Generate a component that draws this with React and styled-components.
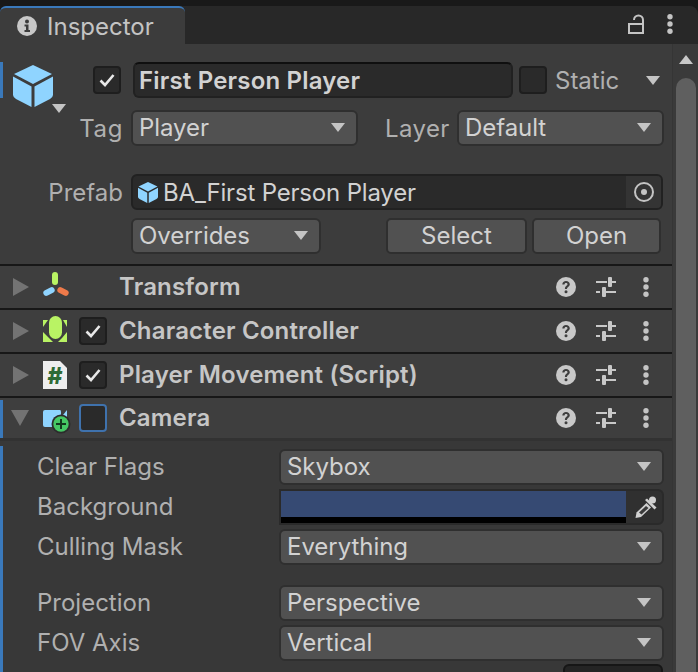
import React from "react";
import styled, { createGlobalStyle } from "styled-components";

const Global = createGlobalStyle`
  html, body { margin: 0; padding: 0; background: #191919; }
  body { font-family: Inter, "Liberation Sans", sans-serif; }
  #root { width: 698px; height: 672px; overflow: hidden; }
`;
const Page = styled.div`
  width: 698px; height: 672px; padding-top: 6px; box-sizing: border-box;
  display: flex; flex-direction: column; background: #191919; overflow: hidden;
`;
const TabBar = styled.div`
  height: 38px; flex: none; display: flex; justify-content: space-between;
  background: #282828; border-radius: 8px 8px 0 0;
`;
const Tab = styled.div`
  width: 185px; box-sizing: border-box; background: #3c3c3c; border-top: 2px solid #3a79bb;
  border-radius: 6px 6px 0 0; display: flex; align-items: center; gap: 10px; padding-left: 17px;
  color: #c4c4c4; font-size: 24px;
`;
const TabTools = styled.div`
  display: flex; align-items: center; gap: 23px; padding-right: 25px; padding-bottom: 2px;
`;
const Content = styled.div`flex: 1; display: flex; min-height: 0; background: #3c3c3c;`;
const Main = styled.div`width: 672px; flex: none; display: flex; flex-direction: column;`;
const Scroll = styled.div`
  width: 26px; flex: none; background: #3a3a3a; border-left: 1px solid #353535; box-sizing: border-box;
  display: flex; flex-direction: column; align-items: center; padding-top: 11px; padding-left: 1px;
`;
const ScrollArrow = styled.div`
  width: 0; height: 0; border-left: 7.5px solid transparent; border-right: 7.5px solid transparent;
  border-bottom: 9px solid #c8c8c8; margin-bottom: 14px;
`;
const Thumb = styled.div`width: 20px; flex: 1; background: #5f5f5f; border-radius: 10px 10px 0 0;`;
const Header = styled.div`
  height: 220px; flex: none; box-sizing: border-box; padding-top: 18px; position: relative;
  display: flex; flex-direction: column;
`;
const HeaderRow = styled.div`
  display: flex; align-items: center; height: 36px; flex: none;
  margin-top: ${p => p.$mt || 0}px; padding-left: ${p => p.$pl || 0}px;
`;
const ModifiedBar = styled.div`
  position: absolute; left: 0; top: ${p => p.$top}px; height: ${p => p.$h}px; width: 3px; background: #3a79bb;
`;
const BigCube = styled.div`width: 93px; flex: none; position: relative; height: 36px;`;
const CubeWrap = styled.div`position: absolute; left: 13px; top: 3px; line-height: 0;`;
const CubeCaret = styled.div`
  position: absolute; left: 52px; top: 42px; width: 0; height: 0;
  border-left: 7px solid transparent; border-right: 7px solid transparent; border-top: 9px solid #c4c4c4;
`;
const Check = styled.div`
  width: 28px; height: 28px; flex: none; box-sizing: border-box; background: #2a2a2a;
  border: 2px solid ${p => p.$focus ? "#3f72ad" : "#1e1e1e"}; border-radius: 4px;
  display: flex; align-items: center; justify-content: center;
`;
const NameField = styled.div`
  width: 380px; height: 36px; box-sizing: border-box; margin-left: 12px; margin-right: 6px;
  background: #2a2a2a; border: 2px solid #212121; border-top-color: #0f0f0f; border-radius: 6px;
  color: #d2d2d2; font-size: 24px; font-weight: 600; letter-spacing: 0.18px; padding-left: 4px;
  display: flex; align-items: center;
`;
const StaticLabel = styled.div`color: #b0b0b0; font-size: 24px; margin-left: 8px; width: 91px;`;
const Arrow = styled.div`
  width: 0; height: 0; flex: none; border-left: 7.5px solid transparent; border-right: 7.5px solid transparent;
  border-top: 9px solid #c4c4c4;
`;
const RowLabel = styled.div`
  color: #b0b0b0; font-size: 24px; width: ${p => p.$w}px; text-align: right; flex: none;
  letter-spacing: ${p => p.$ls || 0}px;
  margin-left: ${p => p.$ml || 0}px; margin-right: ${p => p.$mr ?? 8}px;
`;
const Select = styled.div`
  width: ${p => p.$w}px; height: 36px; flex: none; box-sizing: border-box;
  background: #515151; border: 2px solid #2f2f2f; border-radius: 6px; color: #d2d2d2; font-size: 24px;
  display: flex; align-items: center; justify-content: space-between; padding: 0 11px 2px 6px;
  letter-spacing: -0.05px;
`;
const PrefabField = styled.div`
  width: 532px; height: 36px; box-sizing: border-box; flex: none; background: #2a2a2a;
  border: 2px solid #212121; border-radius: 6px; display: flex; align-items: center;
  color: #d2d2d2; font-size: 24px; padding-left: 5px; gap: 5px;
`;
const PrefabName = styled.div`flex: 1; letter-spacing: -0.18px;`;
const Picker = styled.div`
  width: 35px; height: 32px; flex: none; background: #343434; display: flex; align-items: center;
  justify-content: center; border-radius: 0 4px 4px 0;
`;
const Button = styled.div`
  width: ${p => p.$w}px; height: 36px; box-sizing: border-box; flex: none; background: #515151;
  border: 2px solid #2f2f2f; border-radius: 5px; color: #d2d2d2; font-size: 24px; text-align: center;
  line-height: 32px; margin-left: ${p => p.$ml || 0}px;
`;
const CompRow = styled.div`
  height: ${p => p.$h || 44}px; flex: none; box-sizing: border-box; position: relative;
  border-top: 2px solid #171717; background: #3e3e3e; display: flex; align-items: center; padding-left: 13px;
`;
const ComponentArrowRight = styled.div`
  width: 0; height: 0; flex: none; border-top: 9px solid transparent; border-bottom: 9px solid transparent;
  border-left: 16px solid #737373; margin-right: 13px;
`;
const ComponentArrowDown = styled.div`
  width: 0; height: 0; flex: none; border-left: 9px solid transparent; border-right: 9px solid transparent;
  border-top: 16px solid #737373; margin-left: -2px; margin-right: 13px;
`;
const CompIcon = styled.div`width: 26px; height: 28px; flex: none; line-height: 0; margin-right: 11px;`;
const CheckSlot = styled.div`width: 28px; flex: none; margin-right: 12px;`;
const CompName = styled.div`
  color: #c6c6c6; font-size: 24px; font-weight: 600; letter-spacing: 0.17px; flex: 1; padding-bottom: 1px;
`;
const CompTools = styled.div`display: flex; align-items: center; padding-right: 23px;`;
const HelpSlot = styled.div`display: flex; margin-right: 20px;`;
const SliderSlot = styled.div`display: flex; margin-right: 27px;`;
const Body = styled.div`
  flex: 1; background: #383838; position: relative; box-sizing: border-box; padding: 9px 9px 0 37px;
  border-top: 3px solid #323232; display: flex; flex-direction: column;
`;
const PropRow = styled.div`
  height: 34px; flex: none; display: flex; align-items: center; margin-top: ${p => p.$mt || 0}px;
`;
const PropLabel = styled.div`width: 242px; flex: none; color: #b0b0b0; font-size: 24px; padding-bottom: 1px;`;
const ColorField = styled.div`
  width: 385px; height: 36px; box-sizing: border-box; flex: none; display: flex;
  background: #303030; border: 2px solid #2a2a2a; border-radius: 0 6px 6px 0;
`;
const Swatch = styled.div`flex: 1; display: flex; flex-direction: column; background: #000;`;
const SwatchColor = styled.div`height: 26px; background: #364a73;`;
const Dropper = styled.div`
  width: 36px; flex: none; display: flex; align-items: center; justify-content: center; padding-left: 3px;
  box-sizing: border-box;
`;
const BottomButton = styled.div`
  position: absolute; left: 563px; top: 223px; width: 100px; height: 30px; box-sizing: border-box;
  background: #242424; border: 2px solid #161616; border-radius: 6px;
`;

const Tick = () => (
  <svg width="16" height="14" viewBox="0 0 16 14">
    <path d="M1.5 7.5 L6 12 L14.5 2" fill="none" stroke="#e8e8e8" strokeWidth="2.6" />
  </svg>
);
const Cube = ({ size }) => (
  <svg width={size} height={size * 1.05} viewBox="0 0 40 42">
    <path d="M20 0 L39 9 L20 19 L1 9 Z" fill="#8fd4ff" />
    <path d="M0 11.5 L18.5 21.5 L18.5 42 L3 34 Q0 32 0 30 Z" fill="#8fd4ff" />
    <path d="M40 11.5 L21.5 21.5 L21.5 42 L37 34 Q40 32 40 30 Z" fill="#8fd4ff" />
  </svg>
);
const InfoIcon = () => (
  <svg width="20" height="20" viewBox="0 0 20 20">
    <circle cx="10" cy="10" r="10" fill="#c8c8c8" />
    <circle cx="10" cy="5.5" r="2" fill="#3c3c3c" />
    <path d="M7.5 8.5 H11.5 V14 H13 V16 H7.5 V14 H9 V10.5 H7.5 Z" fill="#3c3c3c" />
  </svg>
);
const LockIcon = () => (
  <svg width="16" height="20" viewBox="0 0 16 20">
    <rect x="1" y="10" width="14" height="9" fill="none" stroke="#c4c4c4" strokeWidth="2" />
    <path d="M6 6 A4.5 4.5 0 0 1 15 6 V10" fill="none" stroke="#c4c4c4" strokeWidth="2" />
  </svg>
);
const Dots = () => (
  <svg width="6" height="20" viewBox="0 0 6 20">
    <circle cx="3" cy="2.8" r="2.7" fill="#c4c4c4" />
    <circle cx="3" cy="10" r="2.7" fill="#c4c4c4" />
    <circle cx="3" cy="17.2" r="2.7" fill="#c4c4c4" />
  </svg>
);
const Help = () => (
  <svg width="20" height="20" viewBox="0 0 20 20">
    <circle cx="10" cy="10" r="10" fill="#c8c8c8" />
    <path d="M6.3 7.6 C6.3 5.2 8 4 10 4 C12.2 4 13.8 5.3 13.8 7.2 C13.8 9.6 11 9.7 11 12 H8.9 C8.9 8.8 11.5 8.8 11.5 7.3 C11.5 6.4 10.9 6 10 6 C9 6 8.5 6.6 8.5 7.6 Z" fill="#3e3e3e" />
    <circle cx="10" cy="14.8" r="1.5" fill="#3e3e3e" />
  </svg>
);
const Sliders = () => (
  <svg width="20" height="20" viewBox="0 0 20 20">
    <g fill="#c8c8c8">
      <rect x="0" y="4" width="11" height="2" />
      <rect x="12" y="0" width="4" height="10" rx="1" />
      <rect x="16" y="4" width="4" height="2" />
      <rect x="0" y="14" width="4" height="2" />
      <rect x="6" y="10" width="4" height="10" rx="1" />
      <rect x="10" y="14" width="10" height="2" />
    </g>
  </svg>
);
const Target = () => (
  <svg width="20" height="20" viewBox="0 0 20 20">
    <circle cx="10" cy="10" r="9" fill="none" stroke="#c4c4c4" strokeWidth="2" />
    <circle cx="10" cy="10" r="3" fill="#c4c4c4" />
  </svg>
);
const TransformIcon = () => (
  <svg width="26" height="28" viewBox="0 0 26 28" style={{ overflow: "visible" }}>
    <rect x="10" y="-1" width="6" height="13" rx="3" fill="#b9f364" />
    <rect x="1" y="15.5" width="12" height="6" rx="3" fill="#8fd4ff" transform="rotate(-27 7 18.5)" />
    <rect x="15" y="15.5" width="12" height="6" rx="3" fill="#ee7a4a" transform="rotate(27 21 18.5)" />
  </svg>
);
const ControllerIcon = () => (
  <svg width="26" height="28" viewBox="0 0 26 28" style={{ overflow: "visible" }}>
    <g fill="#b9f364">
      <rect x="7" y="-1" width="13" height="23" rx="6.5" />
      <path d="M1 3 H6 L1 10 Z" />
      <path d="M25 3 H21 L25 10 Z" />
      <path d="M1 15 L7 21 L11 25 H1 Z" />
      <path d="M25 15 L20 21 L16 25 H25 Z" />
    </g>
  </svg>
);
const ScriptIcon = () => (
  <svg width="26" height="28" viewBox="0 0 26 28" style={{ overflow: "visible" }}>
    <path d="M1 0 H18 L25 7 V28 H1 Z" fill="#eeeeee" />
    <text x="13" y="23" textAnchor="middle" fontFamily="Inter, sans-serif" fontWeight="800" fontSize="23" fill="#2f6b35">#</text>
  </svg>
);
const CameraIcon = () => (
  <svg width="30" height="28" viewBox="0 0 30 28" style={{ overflow: "visible" }}>
    <path d="M3 6 H18 Q19 6 19 8 V23 H3 Q1 23 1 21 V8 Q1 6 3 6 Z" fill="#8fd4ff" />
    <path d="M21 11 L25 6 V18 L21 15 Z" fill="#8fd4ff" />
    <circle cx="19" cy="20" r="9.5" fill="#2c2c2c" />
    <circle cx="19" cy="20" r="7.7" fill="#45c864" />
    <path d="M18 15 H20 V19 H24 V21 H20 V25 H18 V21 H14 V19 H18 Z" fill="#123a1e" />
  </svg>
);
const Eyedropper = () => (
  <svg width="22" height="22" viewBox="0 0 22 22">
    <g fill="#d0d0d0">
      <circle cx="17.5" cy="4" r="3.5" />
      <path d="M10 4 L12 2.5 L21.5 11.5 L19.5 13.5 Z" />
      <path d="M11.5 7 L16 11.5 L6 21 L0.5 22 L1.5 16.5 Z" />
    </g>
    <path d="M11 10 L13.5 12 L6.5 18.5 L4 16.5 Z" fill="#3a3a3a" />
  </svg>
);

const components = [
  { name: "Transform", icon: <TransformIcon /> },
  { name: "Character Controller", icon: <ControllerIcon />, check: true },
  { name: "Player Movement (Script)", icon: <ScriptIcon />, check: true },
];

const Tools = () => (
  <CompTools>
    <HelpSlot><Help /></HelpSlot>
    <SliderSlot><Sliders /></SliderSlot>
    <Dots />
  </CompTools>
);

export default function App() {
  return (
    <Page>
      <Global />
      <TabBar>
        <Tab><InfoIcon />Inspector</Tab>
        <TabTools><LockIcon /><Dots /></TabTools>
      </TabBar>
      <Content>
        <Main>
          <Header>
            <ModifiedBar $top={18} $h={36} />
            <HeaderRow>
              <BigCube>
                <CubeWrap><Cube size={40} /></CubeWrap>
                <CubeCaret />
              </BigCube>
              <Check><Tick /></Check>
              <NameField>First Person Player</NameField>
              <Check />
              <StaticLabel>Static</StaticLabel>
              <Arrow />
            </HeaderRow>
            <HeaderRow $mt={12}>
              <RowLabel $w={123} $ls={0.6}>Tag</RowLabel>
              <Select $w={227}>Player<Arrow /></Select>
              <RowLabel $w={64} $ml={27} $ls={0.4}>Layer</RowLabel>
              <Select $w={207}>Default<Arrow /></Select>
            </HeaderRow>
            <HeaderRow $mt={28}>
              <RowLabel $w={123}>Prefab</RowLabel>
              <PrefabField>
                <Cube size={20} />
                <PrefabName>BA_First Person Player</PrefabName>
                <Picker><Target /></Picker>
              </PrefabField>
            </HeaderRow>
            <HeaderRow $mt={8} $pl={131}>
              <Select $w={190}>Overrides<Arrow /></Select>
              <Button $w={141} $ml={65}>Select</Button>
              <Button $w={129} $ml={5}>Open</Button>
            </HeaderRow>
          </Header>
          {components.map(c => (
            <CompRow key={c.name}>
              <ComponentArrowRight />
              <CompIcon>{c.icon}</CompIcon>
              <CheckSlot>{c.check && <Check><Tick /></Check>}</CheckSlot>
              <CompName>{c.name}</CompName>
              <Tools />
            </CompRow>
          ))}
          <CompRow $h={42}>
            <ModifiedBar $top={2} $h={38} />
            <ComponentArrowDown />
            <CompIcon><CameraIcon /></CompIcon>
            <CheckSlot><Check $focus /></CheckSlot>
            <CompName>Camera</CompName>
            <Tools />
          </CompRow>
          <Body>
            <ModifiedBar $top={5} $h={230} />
            <PropRow>
              <PropLabel>Clear Flags</PropLabel>
              <Select $w={385}>Skybox<Arrow /></Select>
            </PropRow>
            <PropRow $mt={6}>
              <PropLabel>Background</PropLabel>
              <ColorField>
                <Swatch><SwatchColor /></Swatch>
                <Dropper><Eyedropper /></Dropper>
              </ColorField>
            </PropRow>
            <PropRow $mt={6}>
              <PropLabel>Culling Mask</PropLabel>
              <Select $w={385}>Everything<Arrow /></Select>
            </PropRow>
            <PropRow $mt={22}>
              <PropLabel>Projection</PropLabel>
              <Select $w={385}>Perspective<Arrow /></Select>
            </PropRow>
            <PropRow $mt={6}>
              <PropLabel>FOV Axis</PropLabel>
              <Select $w={385}>Vertical<Arrow /></Select>
            </PropRow>
            <BottomButton />
          </Body>
        </Main>
        <Scroll>
          <ScrollArrow />
          <Thumb />
        </Scroll>
      </Content>
    </Page>
  );
}
